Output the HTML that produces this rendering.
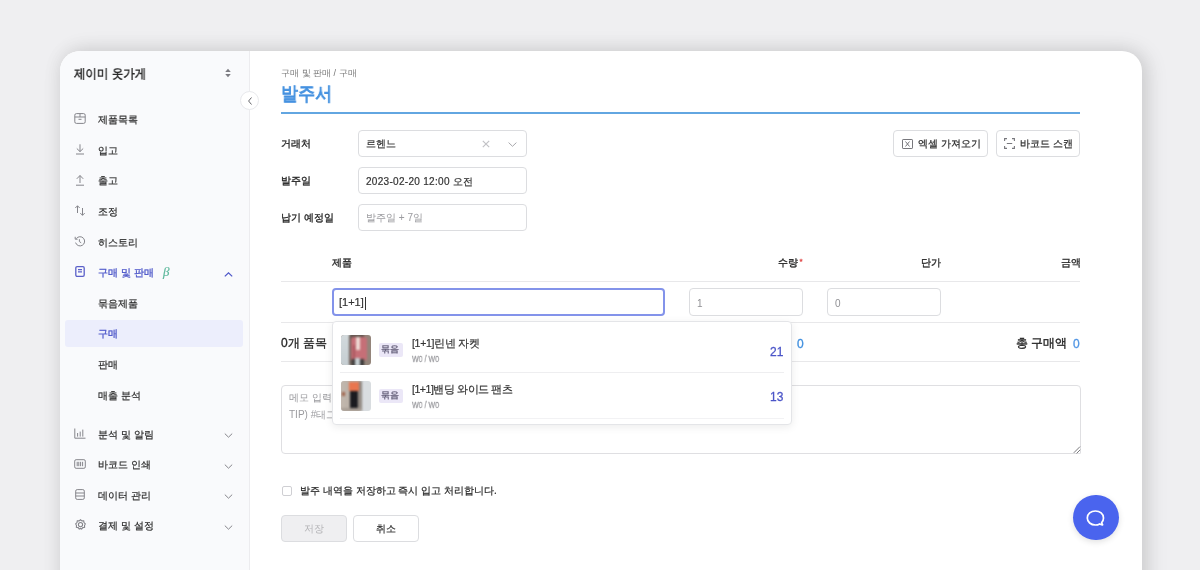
<!DOCTYPE html>
<html><head><meta charset="utf-8">
<style>
*{box-sizing:border-box;margin:0;padding:0}
html,body{width:1200px;height:570px;overflow:hidden}
body{background:#efeff1;font-family:"Liberation Sans",sans-serif;color:#2e2e2e;position:relative}
.card{position:absolute;left:60px;top:51px;width:1082px;height:560px;background:#fff;border-radius:20px;box-shadow:0 0 20px rgba(0,0,0,0.07),5px 0 22px rgba(0,0,0,0.12);overflow:hidden}
.side{position:absolute;left:0;top:0;width:190px;height:100%;background:#f9fafc;border-right:1px solid #ececef}
.t{position:absolute;white-space:nowrap;line-height:1;-webkit-text-stroke-width:0.2px;will-change:transform}
.mi{position:absolute;left:98px;font-size:10px;color:#2a2a2a;white-space:nowrap;line-height:1;-webkit-text-stroke-width:0.2px;will-change:transform}
svg{position:absolute;overflow:visible}
.ic{stroke:#77777c}
.lbl{position:absolute;left:281px;font-size:10px;color:#262626;-webkit-text-stroke-width:0.32px;line-height:1;white-space:nowrap;will-change:transform}
.inp{position:absolute;border:1px solid #dcdde0;border-radius:4px;background:#fff}
.btn{position:absolute;border:1px solid #dcdde0;border-radius:4px;background:#fff}
.line{position:absolute;height:1px;background:#e8e8ea}
</style></head><body>
<div class="card">
  <div class="side"></div>
</div>

<!-- sidebar -->
<div class="t" style="left:74px;top:67px;font-size:13px;font-weight:bold;color:#2b2b2b;transform:scaleX(0.88);transform-origin:0 0;-webkit-text-stroke-width:0">제이미 옷가게</div>
<svg style="left:224px;top:68px" width="8" height="10" viewBox="0 0 8 10"><path d="M4 0.8L6.8 4H1.2z M4 9.2L6.8 6H1.2z" fill="#7c7c82"/></svg>
<div style="position:absolute;left:240px;top:91px;width:19px;height:19px;border-radius:50%;background:#fff;border:1px solid #e8e9ec"></div>
<svg style="left:246px;top:96px" width="8" height="10" viewBox="0 0 8 10"><path d="M5.5 1.5L2.6 5L5.5 8.5" fill="none" stroke="#66666b" stroke-width="1"/></svg>

<!-- sidebar icons -->
<svg style="left:74px;top:113px" width="12" height="11" viewBox="0 0 12 11"><g fill="none" stroke="#85858b" stroke-width="1"><rect x="0.8" y="0.6" width="10.4" height="9.8" rx="1.6"/><path d="M0.8 4H11.2M6 0.6V4M4.5 6.3H7.5"/></g></svg>
<svg style="left:74px;top:144px" width="12" height="11" viewBox="0 0 12 11"><g fill="none" stroke="#85858b" stroke-width="1"><path d="M6 0.3V7.5M2.8 4.5L6 7.6L9.2 4.5M2 10H10"/></g></svg>
<svg style="left:74px;top:174.5px" width="12" height="11" viewBox="0 0 12 11"><g fill="none" stroke="#85858b" stroke-width="1"><path d="M6 8V0.6M2.8 3.8L6 0.5L9.2 3.8M2 10.2H10"/></g></svg>
<svg style="left:74px;top:204.5px" width="12" height="11" viewBox="0 0 12 11"><g fill="none" stroke="#85858b" stroke-width="1"><path d="M3.5 8V0.8M1.3 3L3.5 0.8L5.7 3M8.5 3V10.3M6.3 8.1L8.5 10.3L10.7 8.1"/></g></svg>
<svg style="left:74px;top:235.5px" width="12" height="11" viewBox="0 0 12 11"><g fill="none" stroke="#85858b" stroke-width="1"><path d="M2.3 2.6A4.6 4.6 0 1 1 1.6 6.6"/><path d="M1.2 0.8V3.2H3.6M5.4 3.2V5.6L7.2 6.8"/></g></svg>
<svg style="left:75px;top:265.8px" width="10" height="11" viewBox="0 0 10 11"><g fill="none" stroke="#5b60c9" stroke-width="1.3"><rect x="0.8" y="0.7" width="8.4" height="9.6" rx="1.3"/><path d="M3 3.6H7M3 5.8H7"/></g></svg>
<svg style="left:224px;top:272px" width="9" height="5" viewBox="0 0 9 5"><path d="M0.8 4.4L4.5 0.8L8.2 4.4" fill="none" stroke="#4b55c8" stroke-width="1.2"/></svg>
<svg style="left:74px;top:427.5px" width="12" height="11" viewBox="0 0 12 11"><g fill="none" stroke="#85858b" stroke-width="1"><path d="M0.8 0.5V10.2H11.5M3.6 5V8.6M6.2 3.6V8.6M8.8 1.6V8.6"/></g></svg>
<svg style="left:74px;top:458.5px" width="12" height="10" viewBox="0 0 12 10"><g fill="none" stroke="#85858b" stroke-width="1"><rect x="0.7" y="0.7" width="10.6" height="8.6" rx="1.4"/><path d="M3.2 2.8V7.2M4.8 2.8V7.2M6.6 2.8V7.2M8.6 2.8V7.2"/></g></svg>
<svg style="left:75px;top:488.5px" width="10" height="11" viewBox="0 0 10 11"><g fill="none" stroke="#85858b" stroke-width="1"><rect x="0.7" y="0.6" width="8.6" height="9.8" rx="1.5"/><path d="M0.7 4H9.3M0.7 7H9.3"/></g></svg>
<svg style="left:74.5px;top:519px" width="11" height="11" viewBox="0 0 11 11"><g fill="none" stroke="#85858b" stroke-width="1.1"><path d="M5.5 0.8L6.9 1.9L8.7 1.8L9.0 3.6L10.3 4.9L9.5 6.5L9.6 8.3L7.8 8.6L6.6 10L5.5 9.4L4.2 10L3.2 8.6L1.4 8.3L1.5 6.5L0.7 4.9L2.0 3.6L2.3 1.8L4.1 1.9Z"/><circle cx="5.5" cy="5.6" r="2.1"/></g></svg>
<svg style="left:224px;top:433px" width="9" height="5" viewBox="0 0 9 5"><path d="M0.8 0.6L4.5 4.2L8.2 0.6" fill="none" stroke="#85858b" stroke-width="1"/></svg>
<svg style="left:224px;top:463.5px" width="9" height="5" viewBox="0 0 9 5"><path d="M0.8 0.6L4.5 4.2L8.2 0.6" fill="none" stroke="#85858b" stroke-width="1"/></svg>
<svg style="left:224px;top:494px" width="9" height="5" viewBox="0 0 9 5"><path d="M0.8 0.6L4.5 4.2L8.2 0.6" fill="none" stroke="#85858b" stroke-width="1"/></svg>
<svg style="left:224px;top:524.5px" width="9" height="5" viewBox="0 0 9 5"><path d="M0.8 0.6L4.5 4.2L8.2 0.6" fill="none" stroke="#85858b" stroke-width="1"/></svg>

<div class="mi" style="top:115px">제품목록</div>
<div class="mi" style="top:146px">입고</div>
<div class="mi" style="top:176px">출고</div>
<div class="mi" style="top:207px">조정</div>
<div class="mi" style="top:238px">히스토리</div>
<div class="mi" style="top:268px;color:#4b55c8;-webkit-text-stroke-width:0.3px">구매 및 판매</div>
<div class="t" style="left:163px;top:265px;font-size:13px;font-style:italic;color:#5eb89c;font-family:'Liberation Serif',serif">β</div>
<div class="mi" style="top:299px">묶음제품</div>
<div style="position:absolute;left:65px;top:320px;width:178px;height:26.5px;border-radius:3px;background:#eceefc"></div>
<div class="mi" style="top:329px;color:#4b55c8;-webkit-text-stroke-width:0.3px">구매</div>
<div class="mi" style="top:360px">판매</div>
<div class="mi" style="top:391px">매출 분석</div>
<div class="mi" style="top:430px">분석 및 알림</div>
<div class="mi" style="top:460px">바코드 인쇄</div>
<div class="mi" style="top:491px">데이터 관리</div>
<div class="mi" style="top:521px">결제 및 설정</div>

<!-- main -->
<div class="t" style="left:281px;top:68.5px;font-size:9px;color:#777;-webkit-text-stroke-width:0">구매 및 판매 / 구매</div>
<div class="t" style="left:281px;top:85px;font-size:18.5px;color:#4592e0;transform:scaleX(0.9);transform-origin:0 0;-webkit-text-stroke-width:0.9px">발주서</div>
<div style="position:absolute;left:281px;top:112px;width:799px;height:2px;background:#62a6e1"></div>

<div class="lbl" style="top:139px">거래처</div>
<div class="lbl" style="top:176px">발주일</div>
<div class="lbl" style="top:212.5px">납기 예정일</div>
<div class="inp" style="left:358px;top:130px;width:169px;height:27px"></div>
<div class="t" style="left:366px;top:139px;font-size:10px;color:#333">르헨느</div>
<div class="inp" style="left:358px;top:167px;width:169px;height:27px"></div>
<div class="t" style="left:366px;top:177px;font-size:10px;color:#333;letter-spacing:0.3px">2023-02-20 12:00 오전</div>
<div class="inp" style="left:358px;top:204px;width:169px;height:27px"></div>
<div class="t" style="left:366px;top:212.5px;font-size:10px;color:#9c9ca0;-webkit-text-stroke-width:0.05px">발주일 + 7일</div>

<div class="btn" style="left:893px;top:130px;width:95px;height:27px"></div>
<div class="t" style="left:918px;top:139px;font-size:10px;color:#2a2a2a;-webkit-text-stroke-width:0.22px">엑셀 가져오기</div>
<div class="btn" style="left:996px;top:130px;width:84px;height:27px"></div>
<div class="t" style="left:1020px;top:139px;font-size:10px;color:#2a2a2a;-webkit-text-stroke-width:0.22px">바코드 스캔</div>

<div class="lbl" style="left:332px;top:258px">제품</div>
<div class="lbl" style="left:778px;top:258px">수량<span style="color:#e04848;font-size:8px;position:relative;top:-2px;margin-left:1.5px">*</span></div>
<div class="lbl" style="left:921px;top:258px">단가</div>
<div class="lbl" style="left:1061px;top:258px">금액</div>
<div class="line" style="left:281px;top:281px;width:799px"></div>

<div class="inp" style="left:332px;top:288px;width:333px;height:28px;border:2px solid #8393ea"></div>
<div class="t" style="left:339px;top:297px;font-size:11px;color:#333">[1+1]</div>
<div class="inp" style="left:689px;top:288px;width:114px;height:28px"></div>
<div class="t" style="left:697px;top:299px;font-size:10px;color:#909094;-webkit-text-stroke-width:0">1</div>
<div class="inp" style="left:827px;top:288px;width:114px;height:28px"></div>
<div class="t" style="left:835px;top:299px;font-size:10px;color:#909094;-webkit-text-stroke-width:0">0</div>
<div class="line" style="left:281px;top:322px;width:799px"></div>

<div class="lbl" style="top:337px;font-size:12px;-webkit-text-stroke-width:0.32px">0개 품목</div>
<div class="t" style="left:797px;top:338px;font-size:12px;color:#3f8fdf;-webkit-text-stroke-width:0.3px">0</div>
<div class="t" style="left:1016px;top:337px;font-size:12px;color:#262626;-webkit-text-stroke-width:0.35px">총 구매액</div>
<div class="t" style="left:1073px;top:338px;font-size:12px;color:#4f95e4;-webkit-text-stroke-width:0.3px">0</div>
<div class="line" style="left:281px;top:361px;width:799px"></div>

<div class="inp" style="left:281px;top:385px;width:799.5px;height:69px;border:1.5px solid #dfdfe2;border-bottom-right-radius:1px"></div>
<div class="t" style="left:289px;top:390px;font-size:10px;color:#9a9a9e;line-height:16.5px;-webkit-text-stroke-width:0">메모 입력<br>TIP) #태그</div>

<!-- dropdown -->
<div style="position:absolute;left:332px;top:321px;width:460px;height:104px;background:#fff;border:1px solid #e4e5e8;border-radius:4px;box-shadow:0 2px 8px rgba(0,0,0,0.08)"></div>
<div class="line" style="left:340px;top:372px;width:444px;background:#eeeef0"></div>
<div class="line" style="left:340px;top:418px;width:444px;background:#f2f2f4"></div>
<!-- thumb 1 -->
<div style="position:absolute;left:340.5px;top:334.5px;width:30px;height:30px;border-radius:3px;overflow:hidden;background:#94857b"><div style="position:absolute;left:0;top:0;width:30px;height:30px;filter:blur(0.9px)">
  <div style="position:absolute;left:-2px;top:-2px;width:11px;height:34px;background:linear-gradient(#d3dadd,#c5cdd1);"></div>
  <div style="position:absolute;left:8px;top:0;width:3px;height:30px;background:#6f625b;"></div>
  <div style="position:absolute;left:9px;top:-1px;width:14px;height:3px;background:#5e524c;"></div>
  <div style="position:absolute;left:10px;top:2px;width:16px;height:23px;background:#c66f77;border-radius:3px 3px 1px 1px;"></div>
  <div style="position:absolute;left:15px;top:2px;width:4px;height:13px;background:#efdcd6;"></div>
  <div style="position:absolute;left:12px;top:10px;width:2px;height:14px;background:#a9565e;"></div>
  <div style="position:absolute;left:11px;top:24px;width:12px;height:7px;background:#3d3b3b;"></div>
  <div style="position:absolute;left:14px;top:23px;width:5px;height:8px;background:#c7cfd3;"></div>
</div></div>
<!-- thumb 2 -->
<div style="position:absolute;left:340.5px;top:380.5px;width:30px;height:30px;border-radius:3px;overflow:hidden;background:#d9dde0"><div style="position:absolute;left:0;top:0;width:30px;height:30px;filter:blur(0.9px)">
  <div style="position:absolute;left:-2px;top:-2px;width:21px;height:34px;background:linear-gradient(90deg,#c3b9b0,#b3a99f);"></div>
  <div style="position:absolute;left:18px;top:0;width:3px;height:30px;background:#8f8780;"></div>
  <div style="position:absolute;left:1px;top:11px;width:3px;height:4px;background:#a0624a;"></div>
  <div style="position:absolute;left:8px;top:1px;width:10px;height:9px;background:#e9764f;"></div>
  <div style="position:absolute;left:9px;top:10px;width:8px;height:17px;background:#1b1b1f;"></div>
  <div style="position:absolute;left:0;top:27px;width:20px;height:3px;background:#a89e95;"></div>
</div></div>
<!-- tags -->
<div style="position:absolute;left:378.5px;top:342.5px;width:24px;height:14px;background:#ebe7f7;border-radius:2px"></div>
<div class="t" style="left:381px;top:345px;font-size:8.5px;color:#5a5570;-webkit-text-stroke-width:0.25px">묶음</div>
<div style="position:absolute;left:378.5px;top:388.5px;width:24px;height:14px;background:#ebe7f7;border-radius:2px"></div>
<div class="t" style="left:381px;top:391px;font-size:8.5px;color:#5a5570;-webkit-text-stroke-width:0.25px">묶음</div>
<div class="t" style="left:411.5px;top:338px;font-size:10.5px;color:#333;letter-spacing:-0.3px">[1+1]린넨 자켓</div>
<div class="t" style="left:411.5px;top:354px;font-size:9.5px;color:#9a9a9e;transform:scaleX(0.74);transform-origin:0 0;-webkit-text-stroke-width:0.3px">W0 / W0</div>
<div class="t" style="left:411.5px;top:384px;font-size:10.5px;color:#333;letter-spacing:-0.45px">[1+1]밴딩 와이드 팬츠</div>
<div class="t" style="left:411.5px;top:400px;font-size:9.5px;color:#9a9a9e;transform:scaleX(0.74);transform-origin:0 0;-webkit-text-stroke-width:0.3px">W0 / W0</div>
<div class="t" style="left:770px;top:345.5px;font-size:12px;color:#4b55c8;-webkit-text-stroke-width:0.28px">21</div>
<div class="t" style="left:770px;top:391px;font-size:12px;color:#4b55c8;-webkit-text-stroke-width:0.28px">13</div>

<!-- checkbox -->
<div style="position:absolute;left:282px;top:486px;width:10px;height:10px;border:1px solid #cfcfd3;border-radius:2px;background:#fff"></div>
<div class="t" style="left:300px;top:486px;font-size:10px;color:#2a2a2a;-webkit-text-stroke-width:0.22px">발주 내역을 저장하고 즉시 입고 처리합니다.</div>

<div class="btn" style="left:281px;top:515px;width:66px;height:27px;background:#efeff1"></div>
<div class="t" style="left:304px;top:524px;font-size:10px;color:#b5b5b8;-webkit-text-stroke-width:0">저장</div>
<div class="btn" style="left:353px;top:515px;width:66px;height:27px"></div>
<div class="t" style="left:376px;top:524px;font-size:10px;color:#333">취소</div>

<div style="position:absolute;left:1073px;top:494.5px;width:45.5px;height:45.5px;border-radius:50%;background:#4a64ee;box-shadow:0 2px 6px rgba(0,0,0,0.12)"></div>
<svg style="left:1086px;top:510px" width="19" height="17" viewBox="0 0 19 17"><path d="M16.6 14.8C15.4 14.9 14.4 14.5 13.7 13.9C12.4 14.6 11 15 9.4 15C4.9 15 1.3 12 1.3 7.9C1.3 3.9 4.9 1 9.4 1C13.9 1 17.5 3.9 17.5 7.9C17.5 9.7 16.8 11.3 15.7 12.5C15.9 13.4 16.2 14.2 16.6 14.8Z" fill="none" stroke="#fff" stroke-width="1.7" stroke-linejoin="round"/></svg>
<!-- form icons -->
<svg style="left:482px;top:140px" width="8" height="8" viewBox="0 0 8 8"><path d="M0.8 0.8L7.2 7.2M7.2 0.8L0.8 7.2" stroke="#c2c2c6" stroke-width="1.2"/></svg>
<svg style="left:508px;top:141.5px" width="9" height="5" viewBox="0 0 9 5"><path d="M0.6 0.6L4.5 4.3L8.4 0.6" fill="none" stroke="#a8a8ac" stroke-width="1"/></svg>
<svg style="left:902px;top:138.5px" width="11" height="10" viewBox="0 0 11 10"><g fill="none" stroke="#77777c" stroke-width="1"><rect x="0.5" y="0.5" width="10" height="9" rx="0.6"/><path d="M3.5 2.5L7.5 7.5M7.5 2.5L3.5 7.5"/></g></svg>
<svg style="left:1004px;top:138px" width="11" height="11" viewBox="0 0 11 11"><g fill="none" stroke="#77777c" stroke-width="1.1"><path d="M0.6 3V0.6H3M8 0.6H10.4V3M10.4 8V10.4H8M3 10.4H0.6V8M2.8 5.5H8.2"/></g></svg>
<!-- cursor -->
<div style="position:absolute;left:364.5px;top:297px;width:1px;height:13px;background:#333"></div>
<!-- textarea grip -->
<svg style="left:1072.5px;top:446px" width="8" height="8" viewBox="0 0 8 8"><path d="M7 0.6L0.8 6.8M7.2 3.8L3.6 7.4" stroke="#6a6a6e" stroke-width="0.9"/></svg>
</body></html>
